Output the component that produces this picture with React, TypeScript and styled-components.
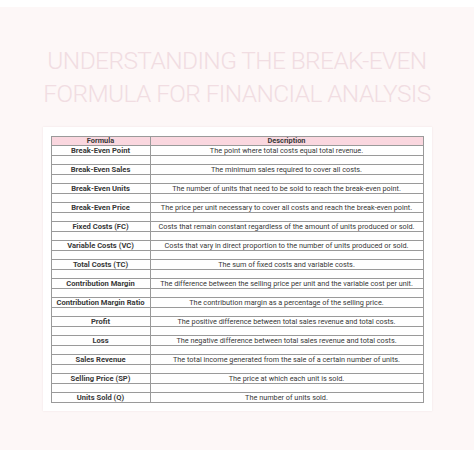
import styled, { createGlobalStyle } from "styled-components";

const GlobalStyle = createGlobalStyle`
  html, body {
    margin: 0;
    padding: 0;
    background: #ffffff;
  }
`;

const Page = styled.div`
  margin-top: 7px;
  height: 443px;
  background: #fdf7f7;
  display: flex;
  flex-direction: column;
  align-items: center;
  overflow: hidden;
`;

const Title = styled.h1`
  margin: 37px 0 0;
  font-family: Roboto, "Open Sans", sans-serif;
  font-weight: 300;
  font-size: 24.5px;
  line-height: 33px;
  letter-spacing: -0.6px;
  color: #f1dde2;
  text-align: center;
  text-transform: uppercase;
  white-space: nowrap;
`;

const Card = styled.div`
  margin-top: 17px;
  width: 372px;
  padding: 9px 9px 8px 8px;
  background: #ffffff;
  box-shadow: 0 0 2px rgba(200, 170, 175, 0.25);
`;

const Table = styled.table`
  width: 372px;
  border-collapse: collapse;
  table-layout: fixed;
  font-family: Roboto, "Liberation Sans", sans-serif;
  color: #383838;
`;

const HeadCell = styled.th`
  height: 8px;
  padding: 0;
  background: #fad7df;
  border: 1px solid #9a9a9a;
  font-size: 7.4px;
  font-weight: 700;
  line-height: 8px;
  text-align: center;
`;

const Cell = styled.td<{ $bold?: boolean }>`
  height: 9px;
  padding: 0;
  border: 1px solid #9a9a9a;
  font-size: ${({ $bold }) => ($bold ? "7.6px" : "7.3px")};
  font-weight: ${({ $bold }) => ($bold ? 700 : 400)};
  line-height: 9px;
  text-align: center;
  white-space: nowrap;
  overflow: hidden;
`;

const GapCell = styled.td`
  height: 8px;
  padding: 0;
  border-left: 1px solid #9a9a9a;
  border-right: 1px solid #9a9a9a;
`;

const rows: [string, string][] = [
  ["Break-Even Point", "The point where total costs equal total revenue."],
  ["Break-Even Sales", "The minimum sales required to cover all costs."],
  ["Break-Even Units", "The number of units that need to be sold to reach the break-even point."],
  ["Break-Even Price", "The price per unit necessary to cover all costs and reach the break-even point."],
  ["Fixed Costs (FC)", "Costs that remain constant regardless of the amount of units produced or sold."],
  ["Variable Costs (VC)", "Costs that vary in direct proportion to the number of units produced or sold."],
  ["Total Costs (TC)", "The sum of fixed costs and variable costs."],
  ["Contribution Margin", "The difference between the selling price per unit and the variable cost per unit."],
  ["Contribution Margin Ratio", "The contribution margin as a percentage of the selling price."],
  ["Profit", "The positive difference between total sales revenue and total costs."],
  ["Loss", "The negative difference between total sales revenue and total costs."],
  ["Sales Revenue", "The total income generated from the sale of a certain number of units."],
  ["Selling Price (SP)", "The price at which each unit is sold."],
  ["Units Sold (Q)", "The number of units sold."],
];

const App = () => (
  <>
    <GlobalStyle />
    <Page>
      <Title>
        Understanding the Break-Even
        <br />
        Formula for Financial Analysis
      </Title>
      <Card>
        <Table>
          <colgroup>
            <col style={{ width: 99 }} />
            <col style={{ width: 273 }} />
          </colgroup>
          <thead>
            <tr>
              <HeadCell>Formula</HeadCell>
              <HeadCell>Description</HeadCell>
            </tr>
          </thead>
          <tbody>
            {rows.map(([name, desc], i) => (
              <>
                {i > 0 && (
                  <tr key={`gap-${i}`}>
                    <GapCell />
                    <GapCell />
                  </tr>
                )}
                <tr key={name}>
                  <Cell $bold>{name}</Cell>
                  <Cell>{desc}</Cell>
                </tr>
              </>
            ))}
          </tbody>
        </Table>
      </Card>
    </Page>
  </>
);

export default App;
